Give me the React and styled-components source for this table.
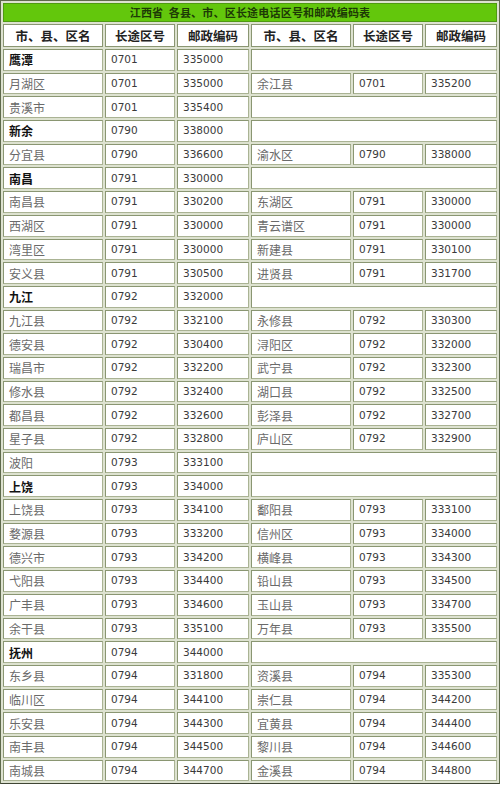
import React from 'react';
import styled, { createGlobalStyle } from 'styled-components';

const GlobalStyle = createGlobalStyle`
  body {
    margin: 0;
    background: #ffffff;
    font-family: "Noto Sans CJK SC", "Liberation Sans", sans-serif;
  }
`;

const Table = styled.table`
  width: 500px;
  table-layout: fixed;
  border-collapse: separate;
  border-spacing: 2px;
  border: 1px solid #5f6a4c;
  border-bottom-color: #3f4634;
  background: #dde2d0;
`;

const Col = styled.col`
  width: ${(p) => p.w}px;
`;

const TitleCell = styled.td`
  height: 17px;
  padding: 0;
  background: #63c70c;
  border: 1px solid #4f9a12;
  text-align: center;
  font-size: 11px;
  line-height: 17px;
  font-weight: bold;
  color: #1d3a06;
  letter-spacing: 0.2px;
  white-space: pre;
`;

const HeadCell = styled.td`
  height: 21px;
  padding: 0;
  background: #fff;
  border: 1px solid #8a9672;
  text-align: center;
  font-size: 12.5px;
  line-height: 21px;
  font-weight: bold;
  color: #222;
`;

const Cell = styled.td`
  height: 19.7px;
  padding: 0 0 0 5px;
  background: #fff;
  border: 1px solid #8a9672;
  border-right-color: #aab394;
  border-bottom-color: #aab394;
  line-height: 19px;
  font-size: ${(p) => (p.code ? '10.5px' : '12px')};
  font-family: ${(p) =>
    p.code ? '"DejaVu Sans", "Liberation Sans", sans-serif' : '"Noto Sans CJK SC", sans-serif'};
  font-weight: ${(p) => (p.bold ? 'bold' : 'normal')};
  color: ${(p) => (p.bold ? '#111' : p.code ? '#3a3a3a' : '#6a6a6a')};
  white-space: nowrap;
  overflow: hidden;
`;

// [name, code, zip] left, optional right; group rows are bold with empty right side
const rows = [
  { g: ['鹰潭', '0701', '335000'] },
  { l: ['月湖区', '0701', '335000'], r: ['余江县', '0701', '335200'] },
  { l: ['贵溪市', '0701', '335400'] },
  { g: ['新余', '0790', '338000'] },
  { l: ['分宜县', '0790', '336600'], r: ['渝水区', '0790', '338000'] },
  { g: ['南昌', '0791', '330000'] },
  { l: ['南昌县', '0791', '330200'], r: ['东湖区', '0791', '330000'] },
  { l: ['西湖区', '0791', '330000'], r: ['青云谱区', '0791', '330000'] },
  { l: ['湾里区', '0791', '330000'], r: ['新建县', '0791', '330100'] },
  { l: ['安义县', '0791', '330500'], r: ['进贤县', '0791', '331700'] },
  { g: ['九江', '0792', '332000'] },
  { l: ['九江县', '0792', '332100'], r: ['永修县', '0792', '330300'] },
  { l: ['德安县', '0792', '330400'], r: ['浔阳区', '0792', '332000'] },
  { l: ['瑞昌市', '0792', '332200'], r: ['武宁县', '0792', '332300'] },
  { l: ['修水县', '0792', '332400'], r: ['湖口县', '0792', '332500'] },
  { l: ['都昌县', '0792', '332600'], r: ['彭泽县', '0792', '332700'] },
  { l: ['星子县', '0792', '332800'], r: ['庐山区', '0792', '332900'] },
  { l: ['波阳', '0793', '333100'] },
  { g: ['上饶', '0793', '334000'] },
  { l: ['上饶县', '0793', '334100'], r: ['鄱阳县', '0793', '333100'] },
  { l: ['婺源县', '0793', '333200'], r: ['信州区', '0793', '334000'] },
  { l: ['德兴市', '0793', '334200'], r: ['横峰县', '0793', '334300'] },
  { l: ['弋阳县', '0793', '334400'], r: ['铅山县', '0793', '334500'] },
  { l: ['广丰县', '0793', '334600'], r: ['玉山县', '0793', '334700'] },
  { l: ['余干县', '0793', '335100'], r: ['万年县', '0793', '335500'] },
  { g: ['抚州', '0794', '344000'] },
  { l: ['东乡县', '0794', '331800'], r: ['资溪县', '0794', '335300'] },
  { l: ['临川区', '0794', '344100'], r: ['崇仁县', '0794', '344200'] },
  { l: ['乐安县', '0794', '344300'], r: ['宜黄县', '0794', '344400'] },
  { l: ['南丰县', '0794', '344500'], r: ['黎川县', '0794', '344600'] },
  { l: ['南城县', '0794', '344700'], r: ['金溪县', '0794', '344800'] },
];

const Triple = ({ item, bold }) => (
  <>
    <Cell bold={bold}>{item[0]}</Cell>
    <Cell code>{item[1]}</Cell>
    <Cell code>{item[2]}</Cell>
  </>
);

export default function App() {
  return (
    <>
      <GlobalStyle />
      <Table>
        <colgroup>
          <Col w={100} />
          <Col w={70} />
          <Col w={72} />
          <Col w={100} />
          <Col w={70} />
          <Col w={72} />
        </colgroup>
        <tbody>
          <tr>
            <TitleCell colSpan={6}>{'江西省  各县、市、区长途电话区号和邮政编码表'}</TitleCell>
          </tr>
          <tr>
            <HeadCell>市、县、区名</HeadCell>
            <HeadCell>长途区号</HeadCell>
            <HeadCell>邮政编码</HeadCell>
            <HeadCell>市、县、区名</HeadCell>
            <HeadCell>长途区号</HeadCell>
            <HeadCell>邮政编码</HeadCell>
          </tr>
          {rows.map((row, i) => (
            <tr key={i}>
              <Triple item={row.g || row.l} bold={!!row.g} />
              {row.r ? <Triple item={row.r} /> : <Cell colSpan={3} />}
            </tr>
          ))}
        </tbody>
      </Table>
    </>
  );
}
